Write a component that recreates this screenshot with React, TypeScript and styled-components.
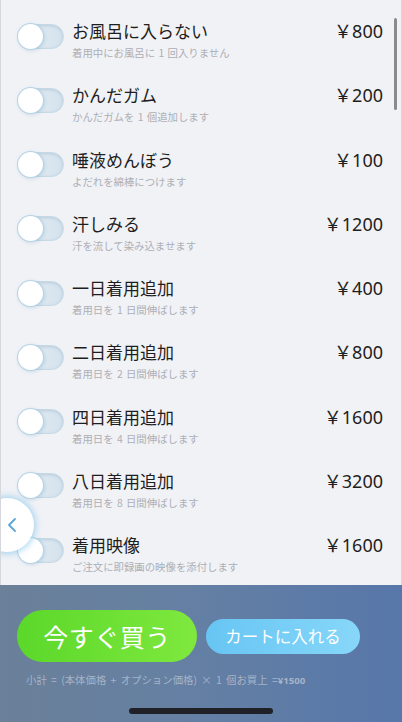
import { useState } from 'react';
import styled, { createGlobalStyle } from 'styled-components';

const GlobalStyle = createGlobalStyle`
  html, body {
    margin: 0;
    padding: 0;
    background: #f1f2f6;
  }
  body {
    font-family: 'Noto Sans CJK JP', 'Noto Sans', sans-serif;
  }
`;

const Screen = styled.div`
  position: relative;
  width: 402px;
  height: 722px;
  display: flex;
  flex-direction: column;
  overflow: hidden;
  background: #f1f2f6;
`;

const List = styled.div`
  position: relative;
  flex: 1;
  padding-top: 20px;
  border-left: 1px solid #d6d7dc;
  border-right: 1px solid #d6d7dc;
  overflow: hidden;
`;

const ScrollBar = styled.div`
  position: absolute;
  top: 18px;
  right: 4px;
  width: 3px;
  height: 92px;
  border-radius: 2px;
  background: #8a8a8e;
`;

const Row = styled.div`
  display: flex;
  align-items: flex-start;
  height: 64.25px;
  padding: 0 18px 0 17px;
  box-sizing: border-box;
`;

const ToggleTrack = styled.button<{ $on: boolean }>`
  position: relative;
  flex: none;
  width: 46px;
  height: 25px;
  margin-top: 3.5px;
  padding: 0;
  border: 1px solid #c6d9e5;
  border-radius: 13px;
  background: ${(p) =>
    p.$on
      ? 'linear-gradient(90deg, #6fd0f5, #8bdcf8)'
      : 'linear-gradient(90deg, #e8eff5, #d4e2ec)'};
  box-shadow: inset 0 1px 3px rgba(120, 160, 190, 0.35);
  cursor: pointer;
`;

const ToggleThumb = styled.span<{ $on: boolean }>`
  position: absolute;
  top: -1px;
  left: ${(p) => (p.$on ? '20px' : '-1px')};
  width: 25px;
  height: 25px;
  border-radius: 50%;
  background: #ffffff;
  box-shadow: 0 0 0 1px #b6d4e5, 1px 1px 4px rgba(90, 150, 190, 0.4);
`;

const TextCol = styled.div`
  flex: 1;
  margin-left: 8px;
  display: flex;
  flex-direction: column;
`;

const Title = styled.div`
  font-size: 17px;
  line-height: 22px;
  color: #1e1e20;
`;

const Sub = styled.div`
  margin-top: 3px;
  font-size: 10.4px;
  line-height: 16px;
  color: #adafb5;
  word-spacing: 1px;
`;

const Price = styled.div`
  font-size: 18px;
  line-height: 22px;
  color: #1e1e20;
  font-family: 'Noto Sans', 'Noto Sans CJK JP', sans-serif;
`;

const BackButton = styled.button`
  position: absolute;
  left: -21px;
  top: 498px;
  width: 54px;
  height: 54px;
  border-radius: 50%;
  border: none;
  background: #ffffff;
  box-shadow: 0 0 6px 2px rgba(110, 190, 235, 0.55);
  display: flex;
  align-items: center;
  justify-content: flex-end;
  padding: 0 17px 0 0;
  cursor: pointer;
`;

const BottomBar = styled.div`
  flex: none;
  height: 137px;
  box-sizing: border-box;
  padding: 25px 17px 0 17px;
  background: linear-gradient(90deg, #6b8099 0%, #6580a3 45%, #5777aa 100%);
  display: flex;
  flex-direction: column;
  align-items: stretch;
`;

const ButtonRow = styled.div`
  display: flex;
  align-items: center;
  gap: 9px;
`;

const BuyButton = styled.button`
  width: 180px;
  height: 52px;
  border: none;
  border-radius: 26px;
  background: linear-gradient(90deg, #5bd82a, #7fe83e);
  color: #fff;
  font-family: 'Noto Sans CJK JP', sans-serif;
  font-size: 25px;
  letter-spacing: 0.5px;
  cursor: pointer;
`;

const CartButton = styled.button`
  width: 154px;
  height: 35px;
  border: none;
  border-radius: 18px;
  background: linear-gradient(90deg, #67c5f3, #87d7f9);
  color: #fff;
  font-family: 'Noto Sans CJK JP', sans-serif;
  font-size: 16.5px;
  cursor: pointer;
`;

const Footnote = styled.div`
  margin: 11px 0 0 9px;
  font-size: 10.4px;
  line-height: 14px;
  color: #a5b3c8;
  white-space: nowrap;
  word-spacing: 2px;

  b {
    font-family: 'Noto Sans', sans-serif;
    font-weight: 700;
    font-size: 9.6px;
  }
`;

const HomeIndicator = styled.div`
  align-self: center;
  margin-top: auto;
  margin-bottom: 8px;
  width: 144px;
  height: 6px;
  border-radius: 3px;
  background: #1f2126;
`;

const options = [
  { name: 'お風呂に入らない', desc: '着用中にお風呂に 1 回入りません', price: 800 },
  { name: 'かんだガム', desc: 'かんだガムを 1 個追加します', price: 200 },
  { name: '唾液めんぼう', desc: 'よだれを綿棒につけます', price: 100 },
  { name: '汗しみる', desc: '汗を流して染み込ませます', price: 1200 },
  { name: '一日着用追加', desc: '着用日を 1 日間伸ばします', price: 400 },
  { name: '二日着用追加', desc: '着用日を 2 日間伸ばします', price: 800 },
  { name: '四日着用追加', desc: '着用日を 4 日間伸ばします', price: 1600 },
  { name: '八日着用追加', desc: '着用日を 8 日間伸ばします', price: 3200 },
  { name: '着用映像', desc: 'ご注文に即録画の映像を添付します', price: 1600 },
];

export default function App() {
  const [checked, setChecked] = useState<boolean[]>(options.map(() => false));

  const toggle = (idx: number) => {
    setChecked((prev) => prev.map((v, i) => (i === idx ? !v : v)));
  };

  return (
    <>
      <GlobalStyle />
      <Screen>
        <List>
          {options.map((opt, idx) => (
            <Row key={idx}>
              <ToggleTrack $on={checked[idx]} onClick={() => toggle(idx)}>
                <ToggleThumb $on={checked[idx]} />
              </ToggleTrack>
              <TextCol>
                <Title>{opt.name}</Title>
                <Sub>{opt.desc}</Sub>
              </TextCol>
              <Price>￥{opt.price}</Price>
            </Row>
          ))}
          <ScrollBar />
          <BackButton aria-label="back">
            <svg width="10" height="16" viewBox="0 0 10 16">
              <path
                d="M8 2 L2 8 L8 14"
                fill="none"
                stroke="#5aa6d6"
                strokeWidth="1.8"
                strokeLinecap="round"
                strokeLinejoin="round"
              />
            </svg>
          </BackButton>
        </List>
        <BottomBar>
          <ButtonRow>
            <BuyButton>今すぐ買う</BuyButton>
            <CartButton>カートに入れる</CartButton>
          </ButtonRow>
          <Footnote>
            小計 = (本体価格 + オプション価格) × 1 個お買上 =<b>¥1500</b>
          </Footnote>
          <HomeIndicator />
        </BottomBar>
      </Screen>
    </>
  );
}
